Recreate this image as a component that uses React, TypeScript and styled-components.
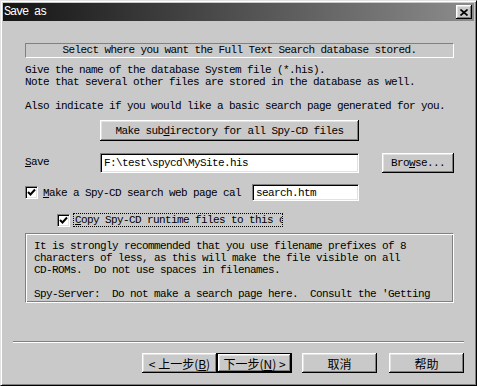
import React from 'react';
import styled, { createGlobalStyle } from 'styled-components';

const GlobalStyle = createGlobalStyle`
  html, body {
    margin: 0;
    padding: 0;
    background: #c9c9c9;
  }
  * {
    box-sizing: border-box;
  }
`

const Window = styled.div`
  width: 477px;
  height: 386px;
  display: flex;
  flex-direction: column;
  padding: 2px;
  background: #c9c9c9;
  border: 1px solid;
  border-color: #e2e2e2 #000 #000 #e2e2e2;
  box-shadow: inset 1px 1px #fff, inset -1px -1px #808080;
  font-family: "Liberation Mono", "Noto Sans CJK SC", monospace;
  font-size: 11px;
  letter-spacing: -0.6px;
  color: #000;
`

const TitleBar = styled.div`
  height: 18px;
  display: flex;
  align-items: center;
  justify-content: space-between;
  padding: 0 2px 0 1px;
  background: linear-gradient(to right, #141414, #4a4a4a 45%, #8c8c8c);
`

const TitleText = styled.span`
  color: #fff;
  font-size: 12px;
  letter-spacing: -1.2px;
  line-height: 18px;
`

const CloseButton = styled.div`
  width: 16px;
  height: 14px;
  display: flex;
  align-items: center;
  justify-content: center;
  background: #c9c9c9;
  box-shadow: inset -1px -1px #000, inset 1px 1px #fff, inset -2px -2px #808080, inset 2px 2px #e2e2e2;
`

const Body = styled.div`
  flex: 1;
  display: flex;
  flex-direction: column;
  padding: 0 20px 0 22px;
`

const Heading = styled.div`
  margin-top: 22px;
  height: 15px;
  border: 1px solid;
  border-color: #808080 #fff #fff #808080;
  text-align: center;
  line-height: 13px;
  white-space: nowrap;
`

const Paragraph = styled.div`
  margin-top: 6px;
  line-height: 12px;
  white-space: pre;
`

const FormGrid = styled.div`
  display: grid;
  grid-template-columns: 75px 259px 23px 72px;
  align-items: start;
`

const Button = styled.div<{ $default?: boolean; $width?: number }>`
  height: 20px;
  width: ${({ $width }) => ($width ? `${$width}px` : 'auto')};
  display: flex;
  align-items: center;
  justify-content: center;
  background: #c9c9c9;
  white-space: nowrap;
  border: ${({ $default }) => ($default ? '1px solid #000' : 'none')};
  box-shadow: inset -1px -1px #000, inset 1px 1px #fff, inset -2px -2px #808080, inset 2px 2px #e2e2e2;
`

const WideButton = styled(Button)`
  margin-top: 8px;
  height: 21px;
  grid-column: 2;
`

const Label = styled.span`
  grid-column: 1;
  padding-top: 3px;
  line-height: 12px;
`

const Field = styled.div<{ $width?: number; $height?: number }>`
  width: ${({ $width }) => ($width ? `${$width}px` : '100%')};
  height: ${({ $height }) => $height ?? 20}px;
  padding: 0 3px;
  display: flex;
  align-items: center;
  background: #fff;
  white-space: nowrap;
  overflow: hidden;
  border: 1px solid;
  border-color: #808080 #fff #fff #808080;
  box-shadow: inset 1px 1px #000, inset -1px -1px #e2e2e2;
`

const SaveRow = styled(FormGrid)`
  margin-top: 12px;
`

const CheckRow = styled.div<{ $indent?: number; $gap: number }>`
  display: flex;
  align-items: center;
  margin-top: ${({ $gap }) => $gap}px;
  padding-left: ${({ $indent }) => $indent ?? 0}px;
`

const Box = styled.div`
  width: 13px;
  height: 13px;
  flex: none;
  background: #fff;
  border: 1px solid;
  border-color: #808080 #fff #fff #808080;
  box-shadow: inset 1px 1px #000, inset -1px -1px #e2e2e2;
  display: flex;
  align-items: center;
  justify-content: center;
`

const CheckLabel = styled.span<{ $width: number; $focused?: boolean }>`
  width: ${({ $width }) => $width}px;
  margin-left: 3px;
  padding-left: 1px;
  line-height: 12px;
  white-space: nowrap;
  overflow: hidden;
  border: 1px ${({ $focused }) => ($focused ? 'dotted #000' : 'solid transparent')};
`

const InfoBox = styled.div`
  margin-top: 6px;
  height: 70px;
  overflow: hidden;
  padding: 6px 8px 0;
  border: 1px solid;
  border-color: #808080 #fff #fff #808080;
  box-shadow: inset 1px 1px #fff, inset -1px -1px #808080;
  line-height: 12px;
  white-space: pre;
`

const Separator = styled.div`
  margin: 38px -10px 0 -12px;
  height: 2px;
  border-top: 1px solid #808080;
  border-bottom: 1px solid #fff;
`

const ButtonRow = styled.div`
  display: flex;
  justify-content: flex-end;
  margin: 10px -10px 0 0;
`

const NavGroup = styled.div`
  display: flex;
  margin-right: 10px;
`

const HelpButton = styled(Button)`
  margin-left: 12px;
`

const CjkText = styled.span`
  font-family: "Noto Sans CJK SC", sans-serif;
  font-size: 12px;
  letter-spacing: 0;
`

const Accel = styled.u`
  text-decoration: underline;
`

const Check = () => (
  <svg width="9" height="9" viewBox="0 0 9 9">
    <polyline points="1,4 3.5,6.5 8,1.5" fill="none" stroke="#000" strokeWidth="2" />
  </svg>
)

export default function App() {
  return (
    <>
      <GlobalStyle />
      <Window>
        <TitleBar>
          <TitleText>Save as</TitleText>
          <CloseButton>
            <svg width="8" height="7" viewBox="0 0 8 7">
              <path d="M0.5 0.5 L7.5 6.5 M7.5 0.5 L0.5 6.5" stroke="#000" strokeWidth="1.6" />
            </svg>
          </CloseButton>
        </TitleBar>
        <Body>
          <Heading>Select where you want the Full Text Search database stored.</Heading>
          <Paragraph>
            {'Give the name of the database System file (*.his).\nNote that several other files are stored in the database as well.\n\nAlso indicate if you would like a basic search page generated for you.'}
          </Paragraph>
          <FormGrid>
            <WideButton>
              Make sub<Accel>d</Accel>irectory for all Spy-CD files
            </WideButton>
          </FormGrid>
          <SaveRow>
            <Label>
              <Accel>S</Accel>ave
            </Label>
            <Field>F:\test\spycd\MySite.his</Field>
            <span />
            <Button>
              Bro<Accel>w</Accel>se...
            </Button>
          </SaveRow>
          <CheckRow $gap={11}>
            <Box>
              <Check />
            </Box>
            <CheckLabel $width={211}>
              <Accel>M</Accel>ake a Spy-CD search web page cal
            </CheckLabel>
            <Field $width={107} $height={17}>search.htm</Field>
          </CheckRow>
          <CheckRow $gap={12} $indent={32}>
            <Box>
              <Check />
            </Box>
            <CheckLabel $width={210} $focused>
              <Accel>C</Accel>opy Spy-CD runtime files to this c
            </CheckLabel>
          </CheckRow>
          <InfoBox>
            {"It is strongly recommended that you use filename prefixes of 8\ncharacters of less, as this will make the file visible on all\nCD-ROMs.  Do not use spaces in filenames.\n\nSpy-Server:  Do not make a search page here.  Consult the 'Getting"}
          </InfoBox>
          <Separator />
          <ButtonRow>
            <NavGroup>
              <Button $width={75}>
                <CjkText>
                  &lt; 上一步(<Accel>B</Accel>)
                </CjkText>
              </Button>
              <Button $width={75} $default>
                <CjkText>
                  下一步(<Accel>N</Accel>) &gt;
                </CjkText>
              </Button>
            </NavGroup>
            <Button $width={75}>
              <CjkText>取消</CjkText>
            </Button>
            <HelpButton $width={75}>
              <CjkText>帮助</CjkText>
            </HelpButton>
          </ButtonRow>
        </Body>
      </Window>
    </>
  )
}
